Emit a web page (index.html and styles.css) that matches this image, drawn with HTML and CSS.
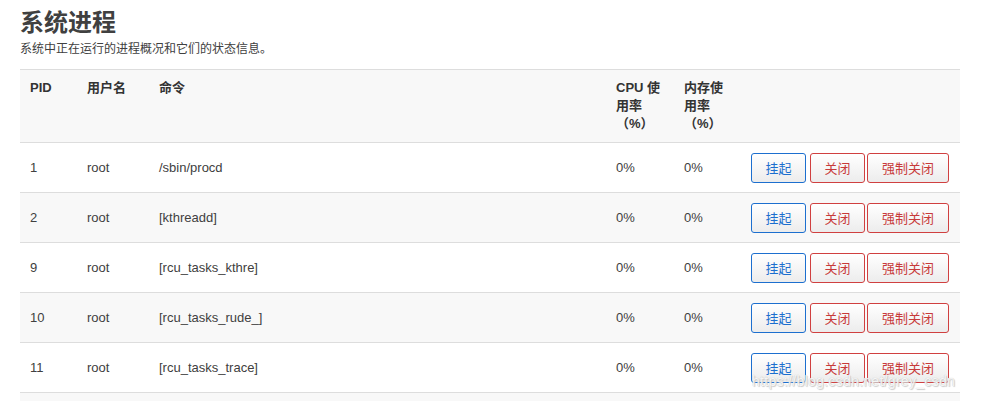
FILE: index.html
```html
<!DOCTYPE html>
<html lang="zh">
<head>
<meta charset="utf-8">
<title>系统进程</title>
<link rel="stylesheet" href="styles.css">
</head>
<body>
<div class="page">
  <h2 class="title">系统进程</h2>
  <p class="desc">系统中正在运行的进程概况和它们的状态信息。</p>
  <table class="ptable">
    <colgroup>
      <col class="c-pid"><col class="c-user"><col class="c-cmd"><col class="c-cpu"><col class="c-mem"><col class="c-act">
    </colgroup>
    <thead>
      <tr class="head">
        <th>PID</th><th>用户名</th><th>命令</th><th>CPU 使用率（%）</th><th>内存使用率（%）</th><th></th>
      </tr>
    </thead>
    <tbody>
      <tr class="odd"><td>1</td><td>root</td><td>/sbin/procd</td><td>0%</td><td>0%</td><td class="acts"><button class="btn blue b1">挂起</button><button class="btn red b2">关闭</button><button class="btn red b3">强制关闭</button></td></tr>
      <tr class="even"><td>2</td><td>root</td><td>[kthreadd]</td><td>0%</td><td>0%</td><td class="acts"><button class="btn blue b1">挂起</button><button class="btn red b2">关闭</button><button class="btn red b3">强制关闭</button></td></tr>
      <tr class="odd"><td>9</td><td>root</td><td>[rcu_tasks_kthre]</td><td>0%</td><td>0%</td><td class="acts"><button class="btn blue b1">挂起</button><button class="btn red b2">关闭</button><button class="btn red b3">强制关闭</button></td></tr>
      <tr class="even"><td>10</td><td>root</td><td>[rcu_tasks_rude_]</td><td>0%</td><td>0%</td><td class="acts"><button class="btn blue b1">挂起</button><button class="btn red b2">关闭</button><button class="btn red b3">强制关闭</button></td></tr>
      <tr class="odd"><td>11</td><td>root</td><td>[rcu_tasks_trace]</td><td>0%</td><td>0%</td><td class="acts"><button class="btn blue b1">挂起</button><button class="btn red b2">关闭</button><button class="btn red b3">强制关闭</button></td></tr>
      <tr class="even"><td></td><td></td><td></td><td></td><td></td><td></td></tr>
    </tbody>
  </table>
</div>
<div class="watermark">https://blog.csdn.net/grey_csdn</div>
</body>
</html>
```

FILE: styles.css
```css
html, body {
  margin: 0;
  padding: 0;
  background: #fff;
  overflow: hidden;
}
body {
  font-family: "Liberation Sans", "Noto Sans CJK SC", sans-serif;
  color: #404040;
  font-size: 13px;
}
.page {
  padding: 8px 21px 0 20px;
}
.title {
  margin: 0;
  font-size: 24px;
  line-height: 30px;
  font-weight: bold;
  color: #404040;
}
.desc {
  margin: 2px 0 0;
  font-size: 12px;
  line-height: 18px;
  color: #404040;
}
.ptable {
  margin-top: 11px;
  width: 940px;
  table-layout: fixed;
  border-collapse: collapse;
}
.c-pid { width: 57px; }
.c-user { width: 72px; }
.c-cmd { width: 457px; }
.c-cpu { width: 68px; }
.c-mem { width: 67px; }
.c-act { width: 219px; }
.ptable th, .ptable td {
  text-align: left;
  padding: 0 10px;
  border-top: 1px solid #dddddd;
}
.head th {
  background: #f8f8f8;
  font-weight: bold;
  color: #333;
  line-height: 18px;
  vertical-align: top;
  padding-top: 9px;
  padding-bottom: 9px;
  height: 54px;
}
.ptable td {
  height: 49px;
  vertical-align: middle;
}
.even td { background: #f8f8f8; }
.acts {
  white-space: nowrap;
  font-size: 0;
}
.btn {
  height: 30px;
  font-family: "Liberation Sans", "Noto Sans CJK SC", sans-serif;
  font-size: 13px;
  padding: 0;
  border-radius: 3px;
  background: linear-gradient(#ffffff, #ececec);
  cursor: pointer;
  vertical-align: middle;
}
.blue { border: 1px solid #1c6fcf; color: #1c6fcf; }
.red { border: 1px solid #d04040; color: #c83a3a; }
.b1 { width: 55px; }
.b2 { width: 55px; margin-left: 4px; }
.b3 { width: 82px; margin-left: 2px; }
.watermark {
  position: absolute;
  left: 752px;
  top: 373px;
  font-size: 14px;
  color: rgba(255,255,255,0.85);
  text-shadow: 0 0 1px #bbb, 1px 1px 1px #ccc;
  font-family: "Liberation Sans", sans-serif;
  letter-spacing: 0.3px;
}
```
